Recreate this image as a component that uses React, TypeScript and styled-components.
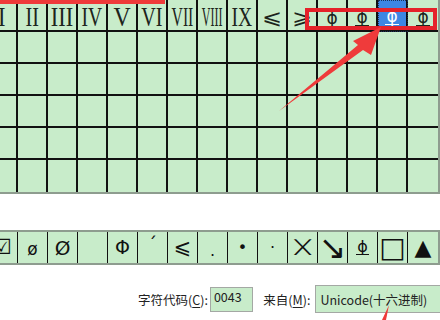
import styled, { createGlobalStyle } from "styled-components";

const GlobalStyle = createGlobalStyle`
  body {
    margin: 0;
    background: #fff;
  }
`;

const GREEN = "#c8ecca";
const FRAME = "#8e9c8f";

const Page = styled.div`
  position: relative;
  width: 440px;
  height: 320px;
  overflow: hidden;
  background: #fff;
  font-family: "Noto Sans CJK SC", sans-serif;
`;

const Table = styled.div`
  display: grid;
  grid-template-columns: repeat(15, 30px);
  grid-auto-rows: 32px;
  width: max-content;
  margin-left: -12px;
  background: ${GREEN};
  border-right: 2px solid ${FRAME};
  border-bottom: 2px solid ${FRAME};
`;

const Cell = styled.div<{ $lastCol?: boolean; $lastRow?: boolean; $selected?: boolean }>`
  box-sizing: border-box;
  display: flex;
  align-items: center;
  justify-content: center;
  border-right: ${(p) => (p.$lastCol ? "none" : "2px solid #111")};
  border-bottom: ${(p) => (p.$lastRow ? "none" : "2px solid #111")};
  background: ${(p) => (p.$selected ? "#3d86e3" : "transparent")};
  outline: ${(p) => (p.$selected ? "1px dotted #1b2f55" : "none")};
  outline-offset: -1px;
  color: ${(p) => (p.$selected ? "#fff" : "#1c241c")};
`;

const Roman = styled.span<{ $squeeze: number }>`
  display: inline-block;
  font-family: "Liberation Serif", serif;
  font-size: 28px;
  line-height: 1;
  padding-top: 3px;
  transform: scaleX(${(p) => p.$squeeze});
`;

const MathGlyph = styled.span`
  display: inline-block;
  font-family: "DejaVu Sans", sans-serif;
  font-size: 24px;
  line-height: 1;
  padding-top: 4px;
  transform: scaleY(0.85);
`;

const Phi = styled.span<{ $underline?: boolean; $double?: boolean }>`
  display: inline-block;
  font-family: "DejaVu Sans", sans-serif;
  font-size: 17px;
  line-height: 15px;
  padding: 0 1px;
  margin-top: 6px;
  border-bottom: ${(p) =>
    p.$double ? "3px double currentColor" : p.$underline ? "1.5px solid currentColor" : "none"};
`;

const Strip = styled.div`
  display: grid;
  grid-template-columns: repeat(15, 30px);
  height: 35px;
  box-sizing: border-box;
  width: max-content;
  margin: 36px 0 0 -12px;
  background: ${GREEN};
  border-top: 2px solid ${FRAME};
  border-bottom: 2px solid ${FRAME};
  border-right: 2px solid ${FRAME};
`;

const StripCell = styled.div<{ $last?: boolean }>`
  display: flex;
  align-items: center;
  justify-content: center;
  border-right: ${(p) => (p.$last ? "none" : "1px solid #111")};
  color: #111;
`;

const Sym = styled.span<{ $size: number; $lift?: number; $sx?: number; $sy?: number }>`
  display: inline-block;
  font-family: "DejaVu Sans", sans-serif;
  font-size: ${(p) => p.$size}px;
  line-height: 1;
  transform: translateY(${(p) => -(p.$lift ?? 0)}px) scale(${(p) => p.$sx ?? 1}, ${(p) => p.$sy ?? 1});
`;

const SymPhi = styled.span`
  font-family: "DejaVu Sans", sans-serif;
  font-size: 16px;
  line-height: 14px;
  padding: 0 1px;
  border-bottom: 1.5px solid currentColor;
`;

const Footer = styled.div`
  display: flex;
  align-items: center;
  height: 28px;
  margin-top: 20px;
  padding-left: 138px;
  font-size: 12.5px;
  color: #222;
  white-space: nowrap;
`;

const Label = styled.span<{ $gap: number }>`
  margin-right: ${(p) => p.$gap}px;
`;

const Key = styled.span`
  text-decoration: underline;
  text-underline-offset: 2px;
`;

const CodeBox = styled.div`
  box-sizing: border-box;
  width: 48px;
  height: 25px;
  margin-right: 10px;
  padding: 1px 3px;
  background: ${GREEN};
  border: 1px solid #a4a8a4;
  line-height: 16px;
`;

const Combo = styled.div`
  box-sizing: border-box;
  display: flex;
  align-items: center;
  width: 140px;
  height: 28px;
  padding-left: 4px;
  background: ${GREEN};
  border: 1px solid #a4a8a4;
  border-right: none;
`;

const Overlay = styled.svg`
  position: absolute;
  left: 0;
  top: 0;
  pointer-events: none;
`;

const romans: [string, number][] = [
  ["I", 0.8],
  ["II", 0.72],
  ["III", 0.8],
  ["IV", 0.7],
  ["V", 0.85],
  ["VI", 0.72],
  ["VII", 0.56],
  ["VIII", 0.43],
  ["IX", 0.7],
];

function HeaderRow() {
  return (
    <>
      {romans.map(([t, s]) => (
        <Cell key={t}>
          <Roman $squeeze={s}>{t}</Roman>
        </Cell>
      ))}
      <Cell>
        <MathGlyph>⩽</MathGlyph>
      </Cell>
      <Cell>
        <MathGlyph>⩾</MathGlyph>
      </Cell>
      <Cell>
        <Phi>ɸ</Phi>
      </Cell>
      <Cell>
        <Phi $underline>ɸ</Phi>
      </Cell>
      <Cell $selected>
        <Phi $double>ɸ</Phi>
      </Cell>
      <Cell $lastCol>
        <Phi $underline>ɸ</Phi>
      </Cell>
    </>
  );
}

const stripSymbols: { ch: string; size: number; lift?: number; sx?: number; sy?: number }[] = [
  { ch: "☑", size: 21 },
  { ch: "ø", size: 17, lift: -2 },
  { ch: "Ø", size: 20 },
  { ch: "", size: 16 },
  { ch: "Φ", size: 19 },
  { ch: "´", size: 18, lift: 4 },
  { ch: "⩽", size: 21 },
  { ch: ".", size: 16, lift: -3 },
  { ch: "•", size: 16 },
  { ch: "·", size: 16 },
  { ch: "╳", size: 16, sx: 1.6, sy: 0.85 },
  { ch: "↘", size: 30, sx: 1.1, sy: 1.1 },
  { ch: "", size: 16 },
  { ch: "□", size: 28 },
  { ch: "▲", size: 22 },
];

export default function App() {
  return (
    <Page>
      <GlobalStyle />
      <Table>
        <HeaderRow />
        {Array.from({ length: 5 }).flatMap((_, r) =>
          Array.from({ length: 15 }).map((__, c) => (
            <Cell key={`${r}-${c}`} $lastCol={c === 14} $lastRow={r === 4} />
          ))
        )}
      </Table>

      <Strip>
        {stripSymbols.map((s, i) => (
          <StripCell key={i} $last={i === 14}>
            {i === 12 ? (
              <SymPhi>ɸ</SymPhi>
            ) : (
              <Sym $size={s.size} $lift={s.lift} $sx={s.sx} $sy={s.sy}>
                {s.ch}
              </Sym>
            )}
          </StripCell>
        ))}
      </Strip>

      <Footer>
        <Label $gap={2}>
          字符代码(<Key>C</Key>):
        </Label>
        <CodeBox>0043</CodeBox>
        <Label $gap={5}>
          来自(<Key>M</Key>):
        </Label>
        <Combo>Unicode(十六进制)</Combo>
      </Footer>

      <Overlay width="440" height="320" viewBox="0 0 440 320">
        <rect x="0" y="0" width="165" height="4" fill="#ef3a3a" />
        <rect x="307" y="10" width="128" height="18" fill="none" stroke="#e5222a" strokeWidth="4" />
        <polygon
          points="279,111 358,45 353,41 381,27 371,55 363,50"
          fill="#ef3b3b"
        />
        <polygon points="382,320 386,320 389,305" fill="#ef3b3b" />
      </Overlay>
    </Page>
  );
}
